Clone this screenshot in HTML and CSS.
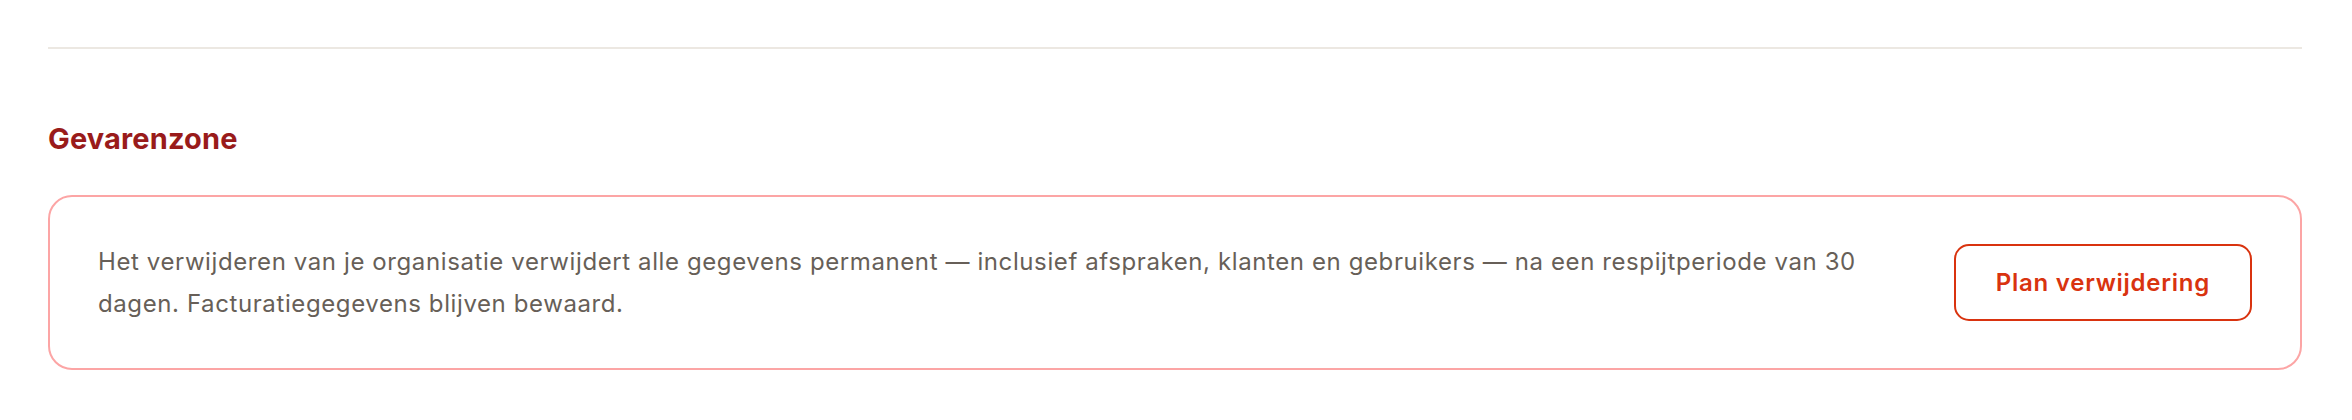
FILE: index.html
```html
<!DOCTYPE html>
<html lang="nl">
<head>
<meta charset="utf-8">
<title>Gevarenzone</title>
<link rel="stylesheet" href="styles.css">
</head>
<body>
<main class="page">
  <hr class="divider">
  <section class="danger">
    <h2 class="danger-title">Gevarenzone</h2>
    <div class="danger-card">
      <p class="danger-text">Het verwijderen van je organisatie verwijdert alle gegevens permanent — inclusief afspraken, klanten en gebruikers — na een respijtperiode van 30 dagen. Facturatiegegevens blijven bewaard.</p>
      <button class="danger-btn" type="button">Plan verwijdering</button>
    </div>
  </section>
</main>
</body>
</html>
```
FILE: styles.css
```css
* { box-sizing: border-box; }
html, body { margin: 0; padding: 0; background: #ffffff; }
body { font-family: Inter, "Noto Sans", "Liberation Sans", sans-serif; }

.page {
  padding: 47px 50px 0 48px;
}

.divider {
  margin: 0;
  border: 0;
  height: 2px;
  background: #ece8e2;
}

.danger {
  margin-top: 68px;
}

.danger-title {
  margin: 0 0 35px 0;
  font-size: 29px;
  line-height: 43px;
  font-weight: 700;
  letter-spacing: 0.15px;
  color: #991b1b;
}

.danger-card {
  display: flex;
  align-items: center;
  gap: 48px;
  border: 2px solid #fca5a5;
  border-radius: 24px;
  padding: 43.5px 48px;
}

.danger-text {
  flex: 1;
  margin: 0;
  font-size: 24px;
  line-height: 42px;
  letter-spacing: 0.6px;
  color: #675f58;
}

.danger-btn {
  flex: none;
  font-family: inherit;
  font-size: 24px;
  line-height: 36px;
  font-weight: 600;
  letter-spacing: 0.75px;
  color: #d9330f;
  background: #ffffff;
  border: 2px solid #d9330f;
  border-radius: 15px;
  padding: 18.5px 40px;
  cursor: pointer;
}
```
